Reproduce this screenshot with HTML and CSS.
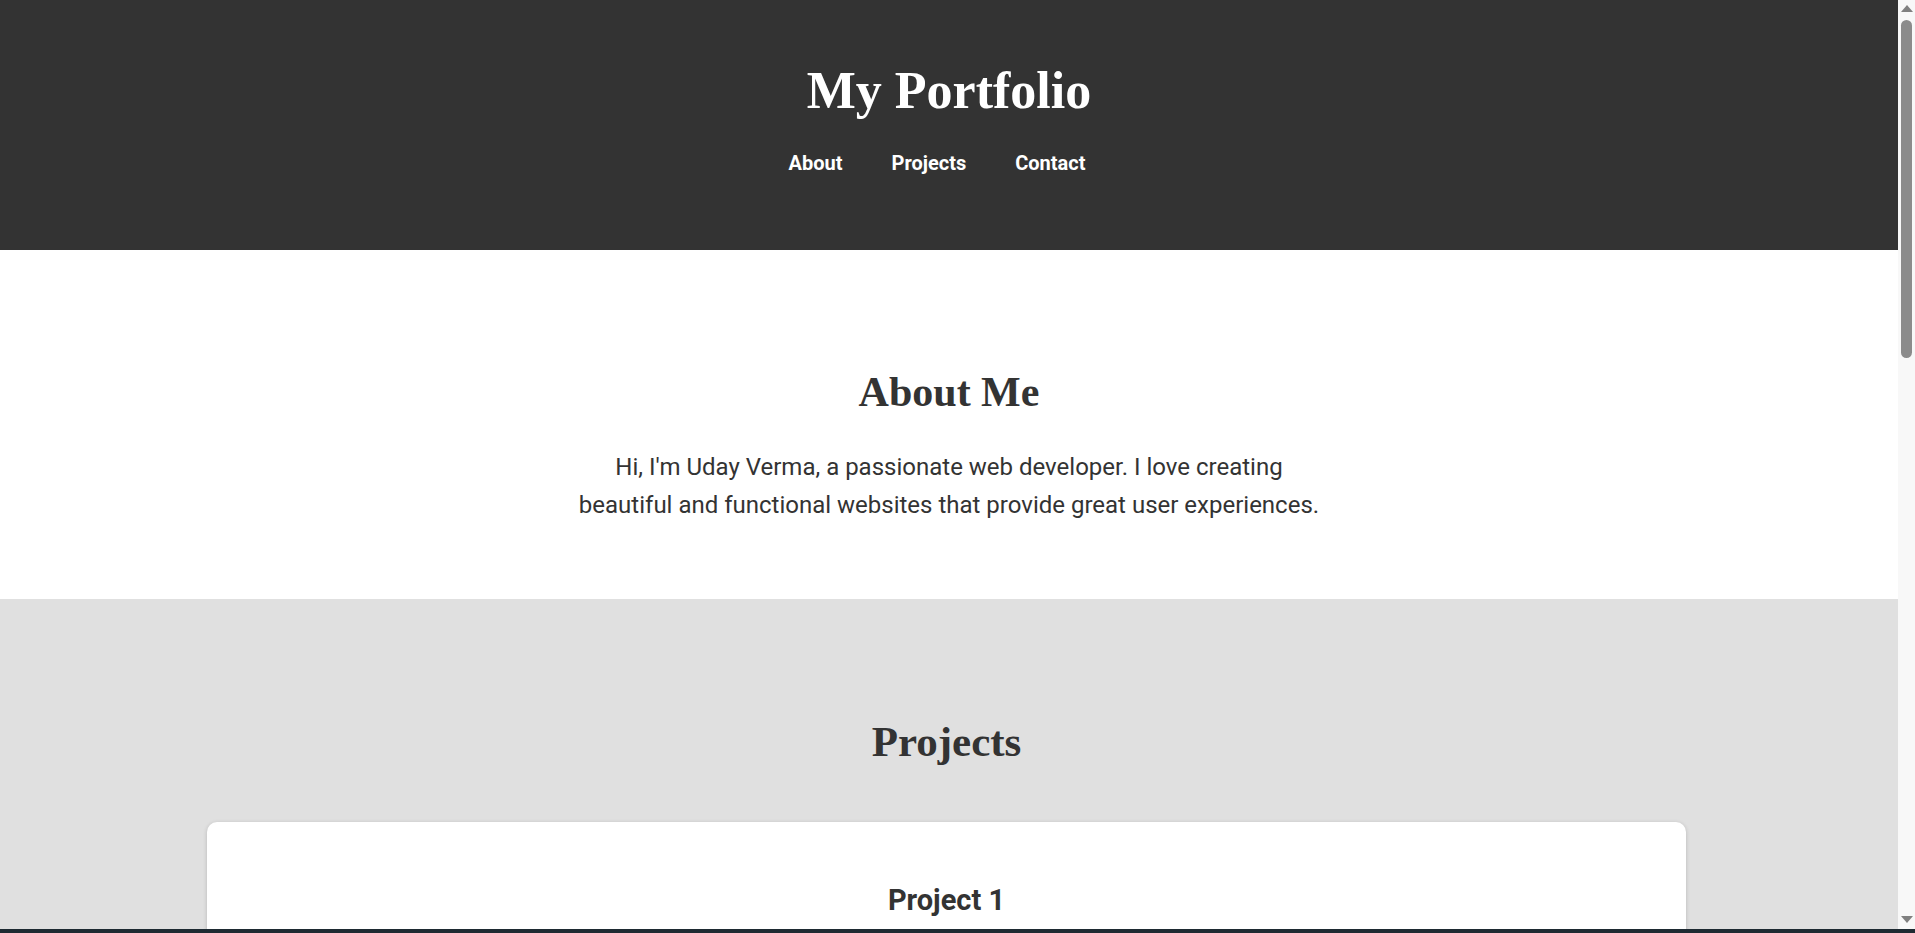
FILE: index.html
```html
<!DOCTYPE html>
<html lang="en">
<head>
<meta charset="UTF-8">
<title>My Portfolio</title>
<link rel="stylesheet" href="styles.css">
</head>
<body>
<header class="site-header">
  <h1 class="site-title">My Portfolio</h1>
  <nav class="site-nav">
    <a href="#about" class="nav-link">About</a>
    <a href="#projects" class="nav-link">Projects</a>
    <a href="#contact" class="nav-link">Contact</a>
  </nav>
</header>

<section id="about" class="section about">
  <h2 class="section-title">About Me</h2>
  <p class="about-text">Hi, I'm Uday Verma, a passionate web developer. I love creating beautiful and functional websites that provide great user experiences.</p>
</section>

<section id="projects" class="section projects">
  <h2 class="section-title projects-title">Projects</h2>
  <div class="project-list">
    <article class="project-card">
      <h3 class="project-title">Project 1</h3>
      <p class="project-desc">A short description of the first project and the technologies used to build it.</p>
    </article>
    <article class="project-card">
      <h3 class="project-title">Project 2</h3>
      <p class="project-desc">A short description of the second project and the technologies used to build it.</p>
    </article>
  </div>
</section>

<section id="contact" class="section contact">
  <h2 class="section-title">Contact</h2>
  <p class="about-text">Feel free to reach out via email.</p>
</section>

<div class="scrollbar" aria-hidden="true">
  <span class="scroll-arrow scroll-arrow-up"></span>
  <span class="scroll-thumb"></span>
  <span class="scroll-arrow scroll-arrow-down"></span>
</div>
<div class="bottom-strip"></div>
</body>
</html>
```

FILE: styles.css
```css
html, body {
  margin: 0;
  padding: 0;
}

body {
  font-family: Roboto, "Liberation Sans", sans-serif;
  color: #333;
  background: #fff;
  margin-right: 17px;
}

.site-header {
  background: #333;
  color: #fff;
  padding: 60px 20px 0;
  height: 250px;
  box-sizing: border-box;
  display: flex;
  flex-direction: column;
  align-items: center;
}

.site-title {
  margin: 0;
  font-family: "Liberation Serif", "Times New Roman", serif;
  font-weight: 700;
  font-size: 52px;
  line-height: 1.2;
}

.site-nav {
  margin-top: 29px;
  display: flex;
  gap: 49px;
  padding-right: 24px;
  line-height: 24px;
}

.nav-link {
  color: #fff;
  text-decoration: none;
  font-weight: 700;
  font-size: 20px;
}

.section {
  padding: 117px 20px 75px;
  text-align: center;
}

.about {
  background: #fff;
  height: 349px;
  box-sizing: border-box;
}

.section-title {
  margin: 0;
  font-family: "Liberation Serif", "Times New Roman", serif;
  font-weight: 700;
  font-size: 42px;
  line-height: 1.2;
  color: #333;
}

.projects-title {
  font-size: 43px;
  margin-bottom: 54px;
}

.about-text {
  margin: 31px auto 0;
  max-width: 760px;
  font-size: 24px;
  line-height: 38px;
  color: #333;
}

.projects {
  background: #e0e0e0;
  padding-left: 207px;
  padding-right: 212px;
}

.project-list {
  display: flex;
  flex-direction: column;
  gap: 40px;
}

.project-card {
  background: #fff;
  border-radius: 10px;
  box-shadow: 0 1px 4px rgba(0, 0, 0, 0.18);
  padding: 61px 40px 50px;
}

.project-title {
  margin: 0;
  font-size: 29px;
  line-height: 1.2;
  font-weight: 700;
  color: #333;
}

.project-desc {
  margin: 20px 0 0;
  font-size: 18px;
  line-height: 1.6;
}

.contact {
  background: #fff;
}

/* window scrollbar drawn over the right edge */
.scrollbar {
  position: fixed;
  top: 0;
  right: 0;
  bottom: 0;
  width: 17px;
  background: #f8f8f8;
  display: flex;
  flex-direction: column;
  align-items: center;
}

.scroll-arrow {
  width: 0;
  height: 0;
  border-left: 6px solid transparent;
  border-right: 6px solid transparent;
}

.scroll-arrow-up {
  margin-top: 5px;
  border-bottom: 7px solid #808080;
}

.scroll-thumb {
  margin-top: 8px;
  width: 11px;
  height: 338px;
  border-radius: 6px;
  background: #8b8b8b;
}

.scroll-arrow-down {
  margin-top: auto;
  margin-bottom: 10px;
  border-top: 7px solid #808080;
}

.bottom-strip {
  position: fixed;
  left: 0;
  right: 0;
  bottom: 0;
  height: 4px;
  background: #1e2a32;
}
```
